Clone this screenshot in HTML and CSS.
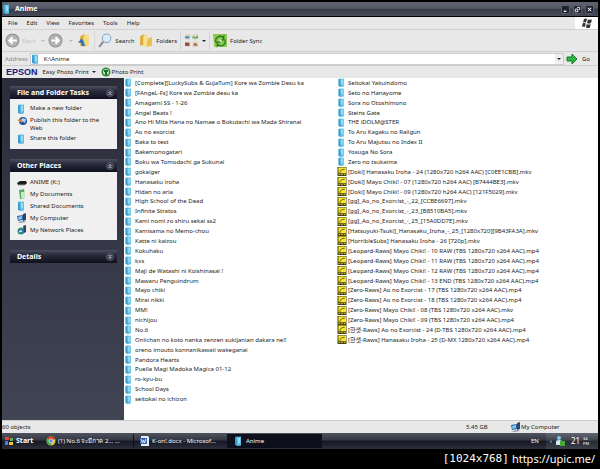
FILE: index.html
```html
<!DOCTYPE html>
<html lang="en">
<head>
    <meta charset="UTF-8">
    <meta name="viewport" content="width=device-width, initial-scale=1.0">
    <title>Anime</title>
    <link rel="stylesheet" href="styles.css">
</head>
<body>
    <!-- Shared icons -->
    <svg class="sprites" aria-hidden="true">
        <symbol id="folder" viewBox="0 0 10 10">
            <path d="M1 1l3-.5V10L1 9z" fill="#3a9ccb"/>
            <path d="M2.500 1L7 .5v9L3.500 10z" fill="#5fbfe6"/>
            <path d="M4 2l2-.3v5l-2 1z" fill="#93dcf5"/>
        </symbol>
        <symbol id="video" viewBox="0 0 10 10">
            <path d="M0 0h10v10H0z" fill="#3a3512"/>
            <path d="M1 .5h8.500V7H1z" fill="#f6e62c"/>
            <path d="M2.500 6.500C3 3.500 5 2.500 8 2.500" fill="none" stroke="#5a500c"/>
            <path d="M1 8.500h2m1 0h2m1 0h2" stroke="#e6d630"/>
        </symbol>
        <symbol id="computer" viewBox="0 0 10 10">
            <path d="M0 3l6-1v5L1 8z" fill="#2666a8"/>
            <path d="M1 4l4-1v3L1.500 7z" fill="#8cc4ee"/>
            <path d="M6 1l3-1v7l-3 1z" fill="#30455e"/>
            <path d="M1 9l6-1 2 1-6 1z" fill="#8796a6"/>
        </symbol>
        <symbol id="network" viewBox="0 0 10 10">
            <circle cx="4" cy="6" r="3.500" fill="#2fa155"/>
            <path d="M1 5l5-1v4L2 9z" fill="#2a6db2"/>
            <path d="M2 6l3-1v2l-3 .5z" fill="#bfe4f6"/>
            <path d="M6 1l3-1v7l-2 1z" fill="#30455e"/>
        </symbol>
        <symbol id="up" viewBox="0 0 8 8">
            <circle cx="4" cy="4" r="3.500" fill="#343746" stroke="#686c7c" stroke-width=".7"/>
            <path d="M2.500 4L4 2.500 5.500 4M2.500 6L4 4.500 5.500 6" fill="none" stroke="#fff" stroke-width=".8"/>
        </symbol>
    </svg>

    <div class="screen">
        <div class="titlebar">
            <svg class="icon"><use href="#folder"/></svg>
            <h1>Anime</h1>
            <div class="window-buttons">
                <button aria-label="Minimize"><svg viewBox="0 0 8 8"><path d="M2 6h3" stroke="#fff" stroke-width="1.500"/></svg></button>
                <button aria-label="Restore"><svg viewBox="0 0 8 8"><path d="M3.500 1.500h3v3M1.500 3.500h3v3h-3z" fill="none" stroke="#fff"/></svg></button>
                <button aria-label="Close"><svg viewBox="0 0 8 8"><path d="M2 2l4 4M6 2L2 6" stroke="#fff" stroke-width="1.200"/></svg></button>
            </div>
        </div>

        <div class="menubar">
            <button>File</button>
            <button>Edit</button>
            <button>View</button>
            <button>Favorites</button>
            <button>Tools</button>
            <button>Help</button>
            <div class="flag">
                <svg viewBox="0 0 12 10"><path d="M3 1q2-1 3 0L5 4.500q-1-1-3 0zM7 1.300q2 1 4 0L10 5q-2 1-4 0zM1.700 5.300q2-1 3 0L4 9Q3 8 1 9zM5.700 6q2 1 4 0L9 9.500q-2 1-4 0z" fill="#333"/></svg>
            </div>
        </div>

        <div class="toolbar">
            <button class="back" disabled>
                <svg viewBox="0 0 14 14"><circle cx="7" cy="7" r="6" fill="#b4b4b4" stroke="#8f8f8f"/><path d="M11 7H4m3-3L4 7l3 3" fill="none" stroke="#fff" stroke-width="1.800"/></svg>
                Back
            </button>
            <span class="arrow faded"></span>
            <button class="forward" disabled aria-label="Forward">
                <svg viewBox="0 0 14 14"><circle cx="7" cy="7" r="6" fill="#b4b4b4" stroke="#8f8f8f"/><path d="M3 7h7M7 4l3 3-3 3" fill="none" stroke="#fff" stroke-width="1.800"/></svg>
            </button>
            <span class="arrow faded"></span>
            <button aria-label="Up">
                <svg viewBox="0 0 14 14"><path d="M4 3l4-2v12l-4-1z" fill="#d9ae3c"/><path d="M7 3l5-2v11l-5 1z" fill="#f5da7c"/><path d="M9 12H5V9H2l3-4 3 4H7" fill="#2c6fc4"/></svg>
            </button>
            <span class="divider"></span>
            <button>
                <svg viewBox="0 0 14 14"><path d="M1 13l4-5" stroke="#8a8f98" stroke-width="2"/><circle cx="8" cy="5" r="4" fill="#d6ecfb" stroke="#8fa9c4"/></svg>
                Search
            </button>
            <button class="folders">
                <svg viewBox="0 0 14 14"><path d="M1 3l4-2v10l-4 1z" fill="#d9ae3c"/><path d="M4 3l4-2v11l-4 1z" fill="#f7e08e"/><path d="M8 5l4-1v8l-5 1z" fill="#e9c04d"/></svg>
                Folders
            </button>
            <span class="divider"></span>
            <button aria-label="Views">
                <svg viewBox="0 0 14 14"><path d="M1 1h5v5H1zM8 1h5v5H8zM1 8h5v5H1zM8 8h5v5H8z" fill="#dcd6c4"/><path d="M1 3h4v2H1z" fill="#4a92c0"/><path d="M8 3l3 1 2-2v3H8z" fill="#58a348"/><path d="M1 9h4v3H1z" fill="#98433a"/><path d="M9 10l2-1 2 3H9z" fill="#b86d38"/></svg>
            </button>
            <span class="arrow"></span>
            <span class="divider"></span>
            <button>
                <svg viewBox="0 0 14 14"><path d="M0 1h13v12H1z" fill="#8cc94f"/><path d="M3 9A4 4 0 0 1 9 4l1-1v3.500H7M11 6a4 4 0 0 1-6 5l-1 1V8.500h3" fill="none" stroke="#26762b" stroke-width="1.200"/><path d="M6 6h2v2H6z" fill="#dff2c0"/></svg>
                Folder Sync
            </button>
        </div>

        <form class="address">
            <label for="path">Address</label>
            <div class="path-box">
                <svg class="icon"><use href="#folder"/></svg>
                <input id="path" type="text" value="K:\Anime">
                <button type="button" aria-label="Show addresses"><span class="arrow"></span></button>
            </div>
            <button type="button" class="go">
                <svg viewBox="0 0 12 12"><path d="M1 4h5V1l5 5-5 5V8H1z" fill="#35b548" stroke="#15792b"/></svg>
                Go
            </button>
        </form>

        <div class="epson">
            <strong>EPSON</strong>
            <button>Easy Photo Print <span class="arrow"></span></button>
            <button class="photo">
                <svg viewBox="0 0 10 10"><circle cx="5" cy="5" r="4.500" fill="#2a8a3a"/><circle cx="5" cy="5" r="3" fill="#b9e0b0"/><path d="M3 3h4v2H3zM4 5h2v3H4z" fill="#246b34"/></svg>
                Photo Print
            </button>
        </div>

        <div class="main">
            <div class="sidebar">
                <section class="panel">
                    <h2>File and Folder Tasks <svg><use href="#up"/></svg></h2>
                    <ul>
                        <li><svg><use href="#folder"/></svg><a href="#">Make a new folder</a></li>
                        <li><svg viewBox="0 0 10 10"><circle cx="6" cy="5" r="4" fill="#24529a"/><path d="M5 2l4 1-1 4-3-2z" fill="#b5d5ee"/><path d="M0 4l5-1v4z" fill="#e0843a"/></svg><a href="#">Publish this folder to the Web</a></li>
                        <li><svg><use href="#folder"/></svg><a href="#">Share this folder</a></li>
                    </ul>
                </section>
                <section class="panel places">
                    <h2>Other Places <svg><use href="#up"/></svg></h2>
                    <ul>
                        <li><svg viewBox="0 0 10 10"><path d="M0 6l3-2h6l1 2-2 2H1z" fill="#1c1c1c"/><path d="M1 8h7" stroke="#999"/></svg><a href="#">ANIME (K:)</a></li>
                        <li><svg viewBox="0 0 10 10"><path d="M2 1l5-1 1 9-5 1z" fill="#58ad62"/><path d="M4 3h4v6H4z" fill="#c2e8bf"/></svg><a href="#">My Documents</a></li>
                        <li><svg><use href="#folder"/></svg><a href="#">Shared Documents</a></li>
                        <li><svg><use href="#computer"/></svg><a href="#">My Computer</a></li>
                        <li><svg><use href="#network"/></svg><a href="#">My Network Places</a></li>
                    </ul>
                </section>
                <section class="panel">
                    <h2>Details <svg class="down"><use href="#up"/></svg></h2>
                </section>
            </div>

            <ul class="files">
                <li><svg><use href="#folder"/></svg>[Complete][LuckySubs &amp; GuJaTum] Kore wa Zombie Desu ka</li>
                <li><svg><use href="#folder"/></svg>[FAngeL-Fs] Kore wa Zombie desu ka</li>
                <li><svg><use href="#folder"/></svg>Amagami SS - 1-26</li>
                <li><svg><use href="#folder"/></svg>Angel Beats !</li>
                <li><svg><use href="#folder"/></svg>Ano Hi Mita Hana no Namae o Bokutachi wa Mada Shiranai</li>
                <li><svg><use href="#folder"/></svg>Ao no exorcist</li>
                <li><svg><use href="#folder"/></svg>Baka to test</li>
                <li><svg><use href="#folder"/></svg>Bakemonogatari</li>
                <li><svg><use href="#folder"/></svg>Boku wa Tomodachi ga Sukunai</li>
                <li><svg><use href="#folder"/></svg>gokaiger</li>
                <li><svg><use href="#folder"/></svg>Hanasaku iroha</li>
                <li><svg><use href="#folder"/></svg>Hidan no aria</li>
                <li><svg><use href="#folder"/></svg>High School of the Dead</li>
                <li><svg><use href="#folder"/></svg>Infinite Stratos</li>
                <li><svg><use href="#folder"/></svg>Kami nomi zo shiru sekai ss2</li>
                <li><svg><use href="#folder"/></svg>Kamisama no Memo-chou</li>
                <li><svg><use href="#folder"/></svg>Katte ni kaizou</li>
                <li><svg><use href="#folder"/></svg>Kokuhaku</li>
                <li><svg><use href="#folder"/></svg>kxs</li>
                <li><svg><use href="#folder"/></svg>Maji de Watashi ni Koishinasai !</li>
                <li><svg><use href="#folder"/></svg>Mawaru Penguindrum</li>
                <li><svg><use href="#folder"/></svg>Mayo chiki</li>
                <li><svg><use href="#folder"/></svg>Mirai nikki</li>
                <li><svg><use href="#folder"/></svg>MM!</li>
                <li><svg><use href="#folder"/></svg>nichijou</li>
                <li><svg><use href="#folder"/></svg>No.6</li>
                <li><svg><use href="#folder"/></svg>Oniichan no koto nanka zenzen sukijanian dakara ne!!</li>
                <li><svg><use href="#folder"/></svg>oreno imouto konnanikawaii wakeganai</li>
                <li><svg><use href="#folder"/></svg>Pandora Hearts</li>
                <li><svg><use href="#folder"/></svg>Puella Magi Madoka Magica 01-12</li>
                <li><svg><use href="#folder"/></svg>ro-kyu-bu</li>
                <li><svg><use href="#folder"/></svg>School Days</li>
                <li><svg><use href="#folder"/></svg>seitokai no ichizon</li>
                <li><svg><use href="#folder"/></svg>Seitokai Yakuindomo</li>
                <li><svg><use href="#folder"/></svg>Seto no Hanayome</li>
                <li><svg><use href="#folder"/></svg>Sora no Otoshimono</li>
                <li><svg><use href="#folder"/></svg>Steins Gate</li>
                <li><svg><use href="#folder"/></svg>THE iDOLM@STER</li>
                <li><svg><use href="#folder"/></svg>To Aru Kagaku no Railgun</li>
                <li><svg><use href="#folder"/></svg>To Aru Majutsu no Index II</li>
                <li><svg><use href="#folder"/></svg>Yosuga No Sora</li>
                <li><svg><use href="#folder"/></svg>Zero no tsukaima</li>
                <li><svg><use href="#video"/></svg>[Doki] Hanasaku Iroha - 24 (1280x720 h264 AAC) [C0EE1CBB].mkv</li>
                <li><svg><use href="#video"/></svg>[Doki] Mayo Chiki! - 07 (1280x720 h264 AAC) [B7444BE3].mkv</li>
                <li><svg><use href="#video"/></svg>[Doki] Mayo Chiki! - 09 (1280x720 h264 AAC) [121F5029].mkv</li>
                <li><svg><use href="#video"/></svg>[gg]_Ao_no_Exorcist_-_22_[CCBE6697].mkv</li>
                <li><svg><use href="#video"/></svg>[gg]_Ao_no_Exorcist_-_23_[B8510BA5].mkv</li>
                <li><svg><use href="#video"/></svg>[gg]_Ao_no_Exorcist_-_25_[15A0DD7E].mkv</li>
                <li><svg><use href="#video"/></svg>[Hatsuyuki-Tsuki]_Hanasaku_Iroha_-_25_[1280x720][9B43FA3A].mkv</li>
                <li><svg><use href="#video"/></svg>[HorribleSubs] Hanasaku Iroha - 26 [720p].mkv</li>
                <li><svg><use href="#video"/></svg>[Leopard-Raws] Mayo Chiki! - 10 RAW (TBS 1280x720 x264 AAC).mp4</li>
                <li><svg><use href="#video"/></svg>[Leopard-Raws] Mayo Chiki! - 11 RAW (TBS 1280x720 x264 AAC).mp4</li>
                <li><svg><use href="#video"/></svg>[Leopard-Raws] Mayo Chiki! - 12 RAW (TBS 1280x720 x264 AAC).mp4</li>
                <li><svg><use href="#video"/></svg>[Leopard-Raws] Mayo Chiki! - 13 END (TBS 1280x720 x264 AAC).mp4</li>
                <li><svg><use href="#video"/></svg>[Zero-Raws] Ao no Exorcist - 17 (TBS 1280x720 x264 AAC).mp4</li>
                <li><svg><use href="#video"/></svg>[Zero-Raws] Ao no Exorcist - 18 (TBS 1280x720 x264 AAC).mp4</li>
                <li><svg><use href="#video"/></svg>[Zero-Raws] Mayo Chiki! - 08 (TBS 1280x720 x264 AAC).mkv</li>
                <li><svg><use href="#video"/></svg>[Zero-Raws] Mayo Chiki! - 09 (TBS 1280x720 x264 AAC).mp4</li>
                <li><svg><use href="#video"/></svg>[한샛-Raws] Ao no Exorcist - 24 (D-TBS 1280x720 x264 AAC).mp4</li>
                <li><svg><use href="#video"/></svg>[한샛-Raws] Hanasaku Iroha - 25 (D-MX 1280x720 x264 AAC).mp4</li>
            </ul>
        </div>

        <div class="statusbar">
            <span>60 objects</span>
            <span class="size">5.45 GB</span>
            <span class="place"><svg><use href="#computer"/></svg>My Computer</span>
        </div>

        <div class="taskbar">
            <button class="start">
                <svg viewBox="0 0 10 10"><path d="M1 1h4v3H1z" fill="#e0443a"/><path d="M6 2h3v3H6z" fill="#5cb650"/><path d="M1 5h3v4H1z" fill="#3f86d8"/><path d="M5 6h4v3H5z" fill="#f0c63a"/></svg>
                Start
            </button>
            <button class="task">
                <svg viewBox="0 0 10 10"><circle cx="5" cy="5" r="4.500" fill="#e8b92d"/><path d="M1 3a4.500 4.500 0 0 1 8 0L5 5z" fill="#d8402f"/><path d="M1 3a4.500 4.500 0 0 0 4 6.500L6 5z" fill="#3fa24c"/><circle cx="5" cy="5" r="2" fill="#4285d8" stroke="#fff" stroke-width=".7"/></svg>
                <span>(1) No.6 จะมีภาค 2... ...</span>
            </button>
            <button class="task">
                <svg viewBox="0 0 10 10"><path d="M1 0h7l1 1v9H1z" fill="#e4ecf6"/><path d="M0 2h7v6H0z" fill="#3564b0"/><path d="M1 3l1.500 4L3.500 4l1 3L6 3" fill="none" stroke="#fff" stroke-width=".8"/></svg>
                <span>K-on!.docx - Microsof...</span>
            </button>
            <button class="task active">
                <svg><use href="#folder"/></svg>
                <span>Anime</span>
            </button>
            <span class="lang">EN</span>
            <div class="tray">
                <span class="chevron">‹</span>
                <svg viewBox="0 0 10 10"><circle cx="4" cy="2" r="2" fill="#7cc6f0"/><path d="M1 9V5q3-2 6 0v4z" fill="#cfe8f8"/><path d="M5 5h5v5H5z" fill="#3fae3a"/></svg>
                <span class="hour">21</span>
                <span class="minute">34<br>PM</span>
            </div>
        </div>
    </div>

    <div class="watermark"><span class="dims">[1024x768]</span><span>https://upic.me/</span></div>
</body>
</html>
```
FILE: styles.css
```css
* {
    box-sizing: border-box;
}
body {
    margin: 0;
    min-height: 100vh;
    padding: 2px 2px 0;
    display: flex;
    flex-direction: column;
    background-color: #000;
    color: #222;
    font-family: "Noto Sans", "Noto Sans CJK KR", sans-serif;
    font-size: 6px;
    line-height: 8px;
}
button, input {
    font: inherit;
    color: inherit;
    background: none;
    border: 0;
    padding: 0;
    margin: 0;
}
button {
    display: flex;
    align-items: center;
    white-space: nowrap;
}
ul {
    list-style: none;
    margin: 0;
    padding: 0;
}
a {
    color: inherit;
    text-decoration: none;
}
svg {
    width: 10px;
    height: 10px;
    flex: none;
}
.sprites {
    display: none;
}
.screen {
    flex: 1;
    display: flex;
    flex-direction: column;
    background-color: #e8e8e8;
}

/* Title bar */
.titlebar {
    height: 15px;
    display: flex;
    align-items: center;
    gap: 3px;
    padding-right: 4px;
    background: linear-gradient(#606470, #555966 45%, #373b47 50%, #484c58);
    border-bottom: 1px solid #000;
    color: #fff;
}
.titlebar h1 {
    flex: 1;
    margin: 0;
    font-size: 7px;
}
.window-buttons {
    display: flex;
    gap: 3px;
}
.window-buttons button {
    width: 9px;
    height: 9px;
    justify-content: center;
    border: 1px solid #5a5e70;
    border-radius: 2px;
    background-color: #1e2130;
}
.window-buttons svg {
    width: 7px;
    height: 7px;
}

/* Menu and toolbars */
.menubar {
    height: 13px;
    display: flex;
    align-items: center;
    gap: 9px;
    padding-left: 6px;
    border-bottom: 1px solid #d2d2d2;
}
.flag {
    margin-left: auto;
    width: 23px;
    height: 12px;
    display: flex;
    align-items: center;
    justify-content: center;
    background-color: #fff;
}
.flag svg {
    width: 12px;
}
.toolbar {
    height: 22px;
    display: flex;
    align-items: center;
    gap: 3px;
    padding-left: 3px;
    border-bottom: 1px solid #cfcfcf;
}
.toolbar svg {
    width: 15px;
    height: 15px;
}
.toolbar button {
    gap: 2px;
}
.toolbar .back {
    color: #c4c4c4;
    margin-right: 3px;
}
.toolbar .forward {
    margin-right: 3px;
}
.toolbar .folders {
    margin-left: 2px;
}
.arrow {
    display: inline-block;
    border: 2px solid transparent;
    border-top-color: #222;
    border-bottom-width: 0;
}
.faded {
    border-top-color: #bbb;
}
.divider {
    width: 1px;
    height: 19px;
    background-color: #d4d4d4;
}
.address {
    height: 13px;
    display: flex;
    align-items: center;
    gap: 2px;
    padding-left: 3px;
}
.address label {
    color: #888;
}
.path-box {
    flex: 1;
    height: 12px;
    display: flex;
    align-items: center;
    gap: 3px;
    background-color: #fff;
    border: 1px solid #ccc;
}
.path-box input {
    flex: 1;
    min-width: 0;
    height: 10px;
    outline: none;
}
.path-box button {
    width: 8px;
    height: 10px;
    justify-content: center;
    background-color: #eee;
}
.go {
    width: 32px;
    gap: 4px;
}
.go svg {
    width: 12px;
    height: 12px;
}
.epson {
    height: 13px;
    display: flex;
    align-items: center;
    gap: 5px;
    padding-left: 4px;
    border-top: 1px solid #ccc;
}
.epson strong {
    color: #16207c;
    font-family: "Liberation Sans", sans-serif;
    font-size: 9px;
}
.epson button {
    gap: 3px;
}
.epson .photo {
    gap: 1px;
}

/* Main area */
.main {
    flex: 1;
    display: flex;
    background-color: #fff;
}
.sidebar {
    width: 122px;
    padding: 8px 7px 0 8px;
    background: linear-gradient(#2b2d3b, #414453);
}
.panel {
    margin-bottom: 10px;
    background-color: #f0f0f0;
}
.panel h2 {
    height: 13px;
    margin: 0;
    padding: 0 3px 0 7px;
    display: flex;
    align-items: center;
    justify-content: space-between;
    background: linear-gradient(#4c4f60, #282a3a 40%, #10111f);
    color: #fff;
    font-size: 7px;
}
.panel h2 svg {
    width: 8px;
    height: 8px;
}
.panel .down {
    transform: rotate(180deg);
}
.panel ul {
    padding: 5px 7px;
    display: flex;
    flex-direction: column;
    gap: 2px;
}
.panel li {
    display: flex;
    align-items: flex-start;
    gap: 3px;
    line-height: 8px;
}
.places li {
    align-items: center;
}
.files {
    flex: 1;
    display: grid;
    grid-template-rows: repeat(33, 1fr);
    grid-template-columns: 213px 1fr;
    grid-auto-flow: column;
    padding-bottom: 16px;
}
.files li {
    display: flex;
    align-items: center;
    gap: 1px;
    white-space: nowrap;
}
.files svg {
    height: 9px;
}

/* Status bar */
.statusbar {
    height: 13px;
    display: flex;
    align-items: center;
    border-top: 1px solid #ccc;
}
.statusbar .size {
    margin-left: auto;
    width: 45px;
}
.statusbar .place {
    width: 87px;
    display: flex;
    align-items: center;
}

/* Taskbar */
.taskbar {
    height: 16px;
    display: flex;
    align-items: center;
    background: linear-gradient(#50545f, #323641 45%, #151824 50%, #2d303b);
    color: #fff;
}
.start {
    width: 38px;
    padding-left: 2px;
    gap: 2px;
    font-size: 7px;
    font-weight: bold;
}
.task {
    width: 94px;
    height: 14px;
    padding-left: 6px;
    gap: 2px;
    border-right: 1px solid #111;
}
.task.active {
    background-color: #0d101c;
}
.lang {
    margin-left: auto;
    width: 15px;
}
.tray {
    width: 52px;
    height: 16px;
    display: flex;
    align-items: center;
    gap: 3px;
    padding-left: 4px;
    background: linear-gradient(#626672, #40444f 45%, #262a36 50%, #3c404b);
}
.hour {
    margin-left: 3px;
    font-size: 8px;
}
.minute {
    font-size: 4px;
    line-height: 5px;
}
.watermark {
    flex: none;
    height: 20px;
    display: flex;
    justify-content: flex-end;
    gap: 3px;
    padding-right: 3px;
    color: #fff;
    font-size: 11px;
    line-height: 20px;
}
.dims {
    font-family: "DejaVu Sans Mono", monospace;
}
```
